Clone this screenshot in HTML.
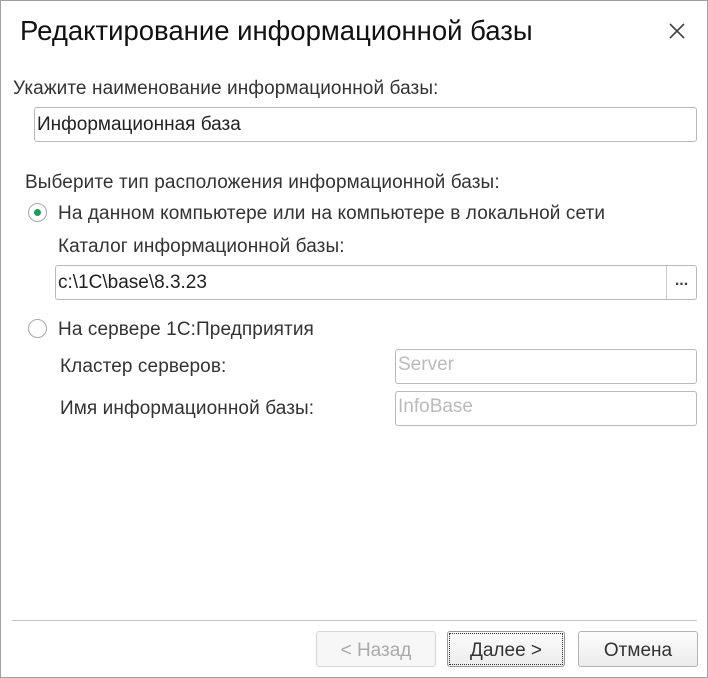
<!DOCTYPE html>
<html><head><meta charset="utf-8"><style>
*{box-sizing:border-box;margin:0;padding:0}
body{width:708px;height:678px;background:#fff;font-family:"Liberation Sans",Arial,sans-serif;color:#333;position:relative;overflow:hidden}
.frame{position:absolute;left:0;top:0;width:708px;height:678px;border:1px solid #a0a0a0}
.a{position:absolute;white-space:nowrap}
.t{font-size:19px;color:#333;letter-spacing:0.1px}
.inp{position:absolute;border:1px solid #b9b9b9;border-radius:3px;background:#fff;font-size:19px;padding-left:2px;color:#222}
.btn{position:absolute;height:36px;border:1px solid #b4b4b4;border-radius:3px;background:linear-gradient(#fdfdfd,#ececec);font-size:19px;text-align:center;line-height:37px;color:#333}
.radio{position:absolute;width:19px;height:19px;border:1px solid #a8a8a8;border-radius:50%;background:#fff}
</style></head><body>
<div class="frame"></div>
<div class="a" style="left:20px;top:15px;font-size:27.5px;color:#111">Редактирование информационной базы</div>
<svg class="a" style="left:668px;top:22px" width="18" height="18" viewBox="0 0 18 18"><path d="M2 2L16 16M16 2L2 16" stroke="#444" stroke-width="1.6"/></svg>
<div class="a t" style="left:13px;top:78px">Укажите наименование информационной базы:</div>
<div class="inp" style="left:34px;top:107px;width:663px;height:35px;line-height:34px">Информационная база</div>
<div class="a t" style="left:25px;top:172px">Выберите тип расположения информационной базы:</div>
<div class="radio" style="left:28px;top:203px"><div style="position:absolute;left:5px;top:5px;width:7px;height:7px;border-radius:50%;background:#1a9e5c"></div></div>
<div class="a t" style="left:58px;top:203px">На данном компьютере или на компьютере в локальной сети</div>
<div class="a t" style="left:58px;top:236px">Каталог информационной базы:</div>
<div class="inp" style="left:55px;top:265px;width:642px;height:35px;line-height:34px">c:\1C\base\8.3.23</div>
<div class="a" style="left:666px;top:266px;width:30px;height:33px;border-left:1px solid #c8c8c8;text-align:center;font-size:16px;line-height:30px;font-weight:bold;color:#444">...</div>
<div class="radio" style="left:28px;top:319px"></div>
<div class="a t" style="left:58px;top:319px">На сервере 1С:Предприятия</div>
<div class="a t" style="left:60px;top:356px">Кластер серверов:</div>
<div class="inp" style="left:395px;top:349px;width:302px;height:35px;line-height:29px;color:#bbb">Server</div>
<div class="a t" style="left:60px;top:398px">Имя информационной базы:</div>
<div class="inp" style="left:395px;top:391px;width:302px;height:35px;line-height:29px;color:#bbb">InfoBase</div>
<div class="a" style="left:12px;top:620px;width:685px;height:1px;background:#c4c4c4"></div>
<div class="btn" style="left:316px;top:631px;width:120px;color:#aaa;border-color:#d6d6d6;background:#f7f7f7">&lt; Назад</div>
<div class="btn" style="left:447px;top:631px;width:118px;border-color:#999"><div style="position:absolute;left:1px;top:1px;right:1px;bottom:1px;border:1px dotted #333"></div>Далее &gt;</div>
<div class="btn" style="left:578px;top:631px;width:120px">Отмена</div>
</body></html>
